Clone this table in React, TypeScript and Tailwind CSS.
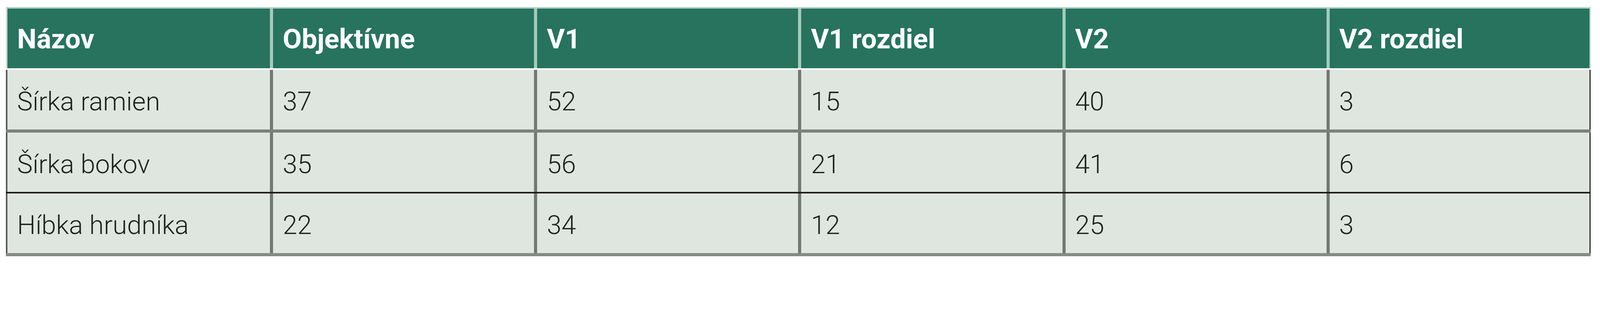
const columns = ["Názov", "Objektívne", "V1", "V1 rozdiel", "V2", "V2 rozdiel"];

const rows = [
  { label: "Šírka ramien", values: ["37", "52", "15", "40", "3"], line: "h-[3.93vw] border-b-[0.205vw] border-b-[#7b817b]" },
  { label: "Šírka bokov", values: ["35", "56", "21", "41", "6"], line: "h-[3.83vw] border-b-[0.1vw] border-b-[#1b1c1b]" },
  { label: "Híbka hrudníka", values: ["22", "34", "12", "25", "3"], line: "h-[3.91vw] border-b-[0.205vw] border-b-[#858a85]" },
];

export default function App() {
  return (
    <div className="min-h-screen bg-white pl-[0.37vw] pt-[0.45vw] font-['Roboto','Liberation_Sans',sans-serif]">
      <div className="w-[99.04vw]">
        <div className="grid h-[3.91vw] grid-cols-6 border-t-[0.1vw] border-b-[0.1vw] border-t-[#b6d3c8] border-b-white bg-[#27735e]">
          {columns.map((col, i) => (
            <div
              key={col}
              className={`flex items-center pl-[0.6vw] pt-[0.1vw] text-[1.72vw] font-bold leading-none text-white ${
                i === 0 ? "border-l-[0.1vw] border-l-[#c9dcd4]" : "border-l-[0.215vw] border-l-[#a2cbbc]"
              } ${i === columns.length - 1 ? "border-r-[0.08vw] border-r-[#b6d3c8]" : ""}`}
            >
              {col}
            </div>
          ))}
        </div>
        {rows.map((row) => (
          <div key={row.label} className={`grid grid-cols-6 bg-[#dfe6df] ${row.line}`}>
            {[row.label, ...row.values].map((cell, i) => (
              <div
                key={i}
                className={`flex items-center pl-[0.6vw] pt-[0.25vw] text-[1.64vw] font-light leading-none text-[#1f211f] ${
                  i === 0 ? "border-l-[0.1vw] border-l-[#575b57]" : "border-l-[0.215vw] border-l-[#737873]"
                } ${i === 5 ? "border-r-[0.08vw] border-r-[#2a2c2a]" : ""}`}
              >
                {cell}
              </div>
            ))}
          </div>
        ))}
      </div>
    </div>
  );
}
